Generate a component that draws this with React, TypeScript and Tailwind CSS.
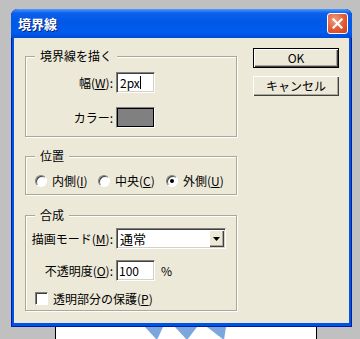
import React from "react";

const font = { fontFamily: '"Noto Sans CJK JP", "Liberation Sans", sans-serif' };

function Sunken({ className, children }: { className: string; children?: React.ReactNode }) {
  // classic 3D sunken field
  return (
    <div
      className={`bg-white border border-t-[#808080] border-l-[#808080] border-r-white border-b-white shadow-[inset_1px_1px_0_#404040,inset_-1px_-1px_0_#d4d0c8] ${className}`}
    >
      {children}
    </div>
  );
}

function Radio({ checked }: { checked?: boolean }) {
  return (
    <div className="w-[12px] h-[12px] rounded-full bg-white border border-t-[#808080] border-l-[#808080] border-r-white border-b-white shadow-[inset_1px_1px_0_#404040] flex items-center justify-center shrink-0">
      {checked && <div className="w-[4px] h-[4px] rounded-full bg-black" />}
    </div>
  );
}

function Group({ title, className, children }: { title: string; className: string; children: React.ReactNode }) {
  return (
    <fieldset
      className={`w-[212px] border border-[#aca899] shadow-[1px_1px_0_#fff,inset_1px_1px_0_#fff] ${className}`}
    >
      <legend className="ml-[9px] px-[5px] h-[14px] leading-[14px] text-[12px] bg-[#ece9d8]">{title}</legend>
      {children}
    </fieldset>
  );
}

function Button({ label, isDefault }: { label: string; isDefault?: boolean }) {
  return (
    <div
      className={`w-[86px] h-[20px] flex items-center justify-center text-[12px] bg-[#ece9d8] ${
        isDefault
          ? "border border-black shadow-[inset_1px_1px_0_#fff,inset_-1px_-1px_0_#404040,inset_-2px_-2px_0_#aca899]"
          : "shadow-[inset_1px_1px_0_#fff,inset_-1px_-1px_0_#404040,inset_-2px_-2px_0_#aca899]"
      }`}
    >
      {label}
    </div>
  );
}

export default function App() {
  return (
    <div className="w-[360px] h-[339px] bg-[#c0c0c0] overflow-hidden pt-[9px] text-black" style={font}>
      {/* dialog window */}
      <div className="ml-[11px] w-[341px] h-[318px] rounded-t-[7px] bg-[#0054e3] flex flex-col shadow-[inset_1px_0_0_#0019b0,inset_-1px_0_0_#001ea0,inset_0_-1px_0_#001ea0]">
        <div className="h-[29px] rounded-t-[7px] bg-[linear-gradient(to_bottom,#4a9bff_0%,#0d60ec_14%,#0058e6_45%,#005cee_80%,#004ad8_100%)] flex items-center pl-[7px] pr-[4px]">
          <span className="text-white font-bold text-[13px] leading-none [text-shadow:1px_1px_0_#0a1e73]">境界線</span>
          <div className="ml-auto w-[21px] h-[21px] rounded-[3px] border border-white bg-[radial-gradient(circle_at_35%_30%,#f29a7e_0%,#e35b32_55%,#c8401c_100%)] flex items-center justify-center">
            <svg width="11" height="11" viewBox="0 0 11 11">
              <path d="M1.5 1.5 L9.5 9.5 M9.5 1.5 L1.5 9.5" stroke="#fff" strokeWidth="2.2" strokeLinecap="square" />
            </svg>
          </div>
        </div>

        <div className="flex-1 mx-[3px] mb-[4px] bg-[#ece9d8] flex text-[12px]">
          <div className="pl-[11px] flex flex-col">
            <Group title="境界線を描く" className="mt-[11px] pt-[9px] pb-[8px]">
              <div className="flex items-center h-[21px]">
                <span className="w-[90px] text-right pr-[3px]">
                  幅(<u>W</u>):
                </span>
                <Sunken className="w-[39px] h-[21px] flex items-center pl-[3px]">
                  <span>2px</span>
                  <span className="w-[1px] h-[13px] bg-black" />
                </Sunken>
              </div>
              <div className="flex items-center h-[21px] mt-[14px]">
                <span className="w-[90px] text-right pr-[3px]">カラー:</span>
                <div className="w-[39px] h-[21px] bg-[#808080] border border-t-[#808080] border-l-[#808080] border-r-white border-b-white shadow-[inset_1px_1px_0_#000,inset_-1px_-1px_0_#000]" />
              </div>
            </Group>

            <Group title="位置" className="mt-[12px] pt-[12px] pb-[7px]">
              <div className="flex items-center pl-[9px] h-[12px]">
                <div className="w-[63px] flex items-center gap-[5px]">
                  <Radio />
                  <span>
                    内側(<u>I</u>)
                  </span>
                </div>
                <div className="w-[68px] flex items-center gap-[5px]">
                  <Radio />
                  <span>
                    中央(<u>C</u>)
                  </span>
                </div>
                <div className="flex items-center gap-[5px]">
                  <Radio checked />
                  <span>
                    外側(<u>U</u>)
                  </span>
                </div>
              </div>
            </Group>

            <Group title="合成" className="mt-[13px] pt-[6px] pb-[5px]">
              <div className="flex items-center h-[21px]">
                <span className="w-[90px] text-right pr-[3px]">
                  描画モード(<u>M</u>):
                </span>
                <Sunken className="w-[110px] h-[21px] flex items-center pl-[3px] pr-[1px]">
                  <span className="text-[13px]">通常</span>
                  <div className="ml-auto w-[15px] h-[17px] bg-[#ece9d8] shadow-[inset_1px_1px_0_#fff,inset_-1px_-1px_0_#404040,inset_-2px_-2px_0_#aca899] flex items-center justify-center">
                    <svg width="7" height="4" viewBox="0 0 7 4">
                      <path d="M0 0 H7 L3.5 4 Z" fill="#000" />
                    </svg>
                  </div>
                </Sunken>
              </div>
              <div className="flex items-center h-[21px] mt-[11px]">
                <span className="w-[90px] text-right pr-[3px]">
                  不透明度(<u>O</u>):
                </span>
                <Sunken className="w-[39px] h-[21px] flex items-center pl-[2px]">
                  <span>100</span>
                </Sunken>
                <span className="ml-[6px]">%</span>
              </div>
              <div className="flex items-center h-[13px] mt-[11px] pl-[9px] gap-[5px]">
                <div className="w-[13px] h-[13px] bg-white border border-t-[#808080] border-l-[#808080] border-r-white border-b-white shadow-[inset_1px_1px_0_#404040]" />
                <span>
                  透明部分の保護(<u>P</u>)
                </span>
              </div>
            </Group>
          </div>

          <div className="ml-[16px] mt-[10px] flex flex-col gap-[8px]">
            <Button label="OK" isDefault />
            <Button label="キャンセル" />
          </div>
        </div>
      </div>

      {/* canvas peeking out below the dialog */}
      <div className="ml-[55px] w-[262px] h-[13px] bg-white border-x border-black">
        <svg width="260" height="13" viewBox="0 0 260 13">
          <path d="M89 0 H107 L101 13 Z" fill="#7aa7de" />
          <path d="M119 0 H141 L131 13 Z" fill="#7aa7de" />
          <path d="M151 0 H170 L168 13 Z" fill="#7aa7de" />
        </svg>
      </div>
    </div>
  );
}
